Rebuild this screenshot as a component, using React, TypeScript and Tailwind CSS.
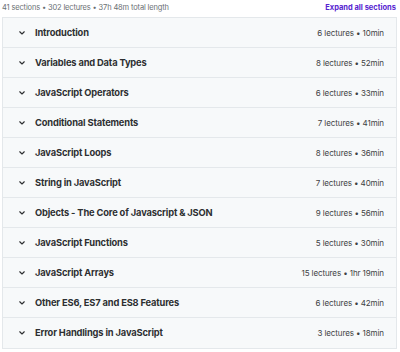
import React from 'react';

const sections = [
  { title: 'Introduction', meta: '6 lectures • 10min' },
  { title: 'Variables and Data Types', meta: '8 lectures • 52min' },
  { title: 'JavaScript Operators', meta: '6 lectures • 33min' },
  { title: 'Conditional Statements', meta: '7 lectures • 41min' },
  { title: 'JavaScript Loops', meta: '8 lectures • 36min' },
  { title: 'String in JavaScript', meta: '7 lectures • 40min' },
  { title: 'Objects - The Core of Javascript & JSON', meta: '9 lectures • 56min' },
  { title: 'JavaScript Functions', meta: '5 lectures • 30min' },
  { title: 'JavaScript Arrays', meta: '15 lectures • 1hr 19min' },
  { title: 'Other ES6, ES7 and ES8 Features', meta: '6 lectures • 42min' },
  { title: 'Error Handlings in JavaScript', meta: '3 lectures • 18min' },
];

function Chevron() {
  return (
    <svg width="8" height="8" viewBox="0 0 8 8" fill="none" className="text-[#2d2f31]">
      <path d="M1.75 2.75 4 5 6.25 2.75" stroke="currentColor" strokeWidth="1.1" strokeLinecap="round" strokeLinejoin="round" />
    </svg>
  );
}

function App() {
  return (
    <div className="w-[400px] h-[352px] bg-white px-[2px] font-['Inter',sans-serif] text-[#2d2f31] overflow-hidden">
      <div className="flex items-center justify-between h-[17px] pr-[2px] pb-[2px]">
        <span className="text-[7.5px] text-[#6a6f73] tracking-[-0.15px]">41 sections • 302 lectures • 37h 48m total length</span>
        <span className="text-[7.5px] font-bold text-[#5624d0]">Expand all sections</span>
      </div>
      <div className="border border-[#e4e8eb] w-[395px]">
        {sections.map((s) => (
          <div key={s.title} className="flex items-center h-[30px] bg-[#f7f9fa] border-b border-[#e4e8eb] last:border-b-0 pl-[15px] pr-[12px]">
            <Chevron />
            <span className="ml-[9px] text-[9.3px] font-bold tracking-[-0.15px]">{s.title}</span>
            <span className="ml-auto text-[8px] text-[#3e4143] tracking-[-0.1px]">{s.meta}</span>
          </div>
        ))}
      </div>
    </div>
  );
}

export default App;
